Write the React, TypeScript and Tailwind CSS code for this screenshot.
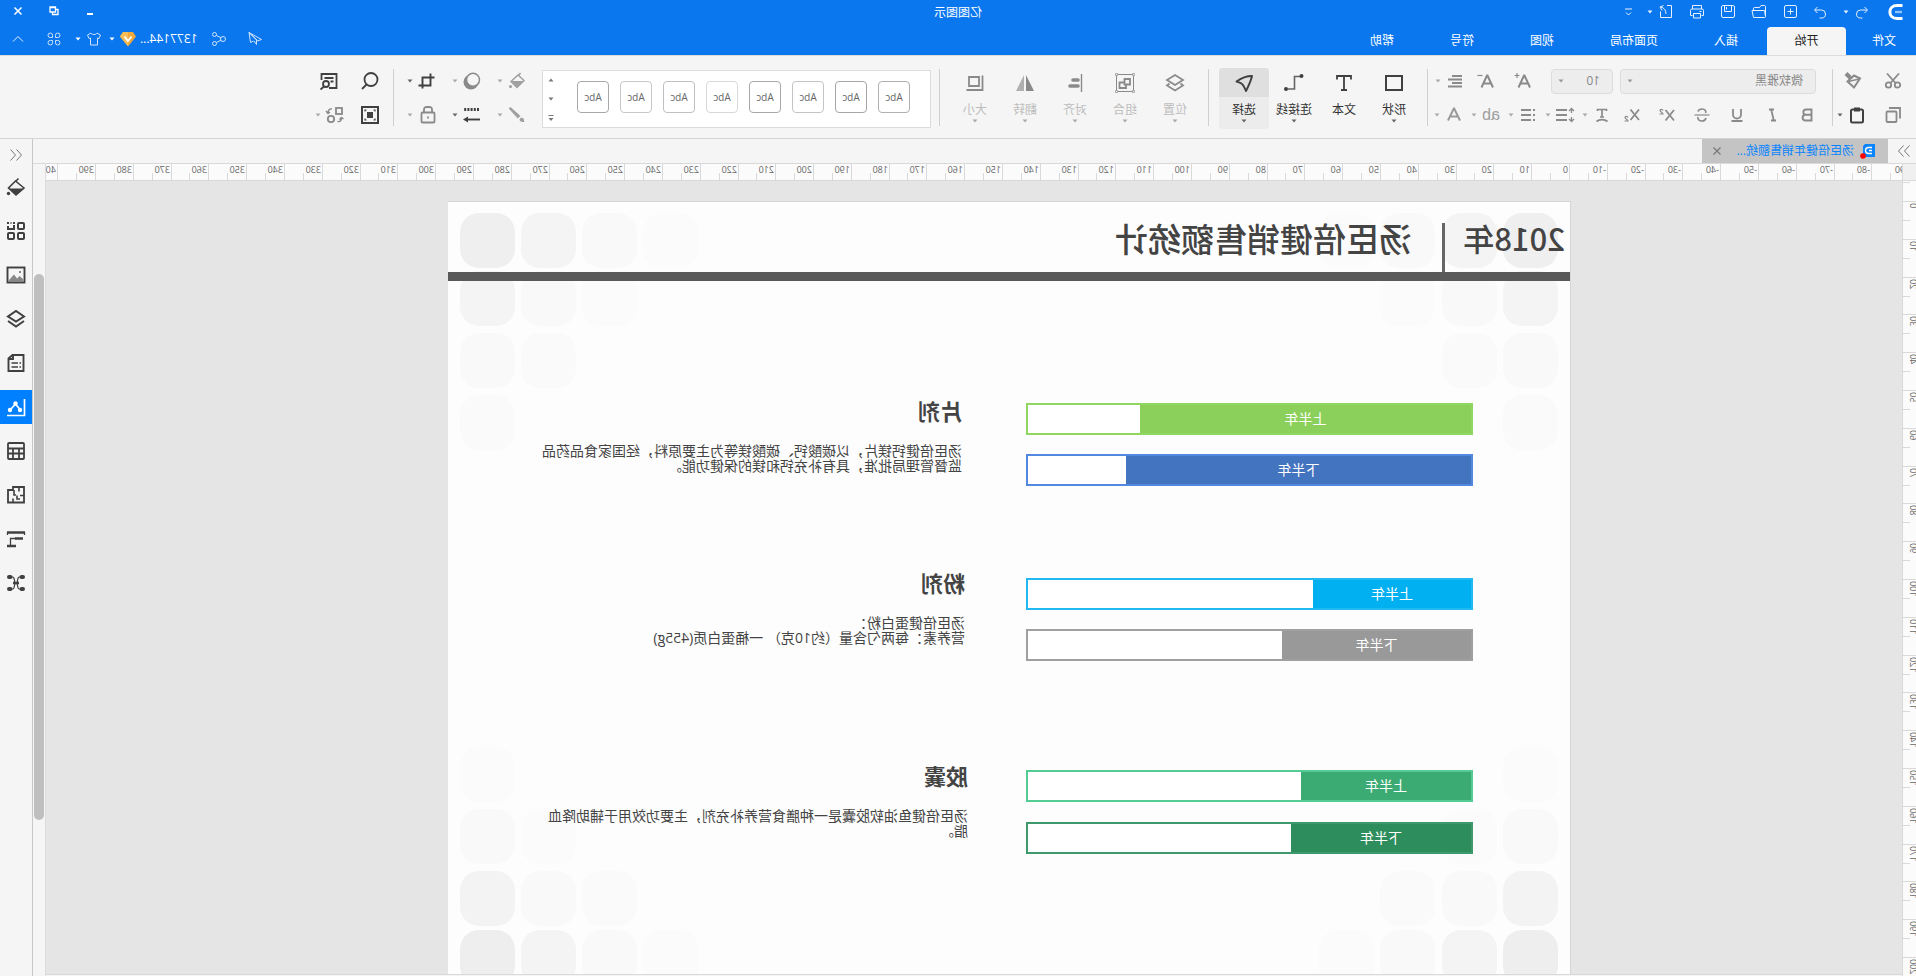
import React from "react";

type P = { children?: React.ReactNode; s?: number; className?: string; sw?: number };

function Ic({ children, s = 20, className = "", sw = 1 }: P) {
  return (
    <svg
      width={s}
      height={s}
      viewBox={`0 0 ${s} ${s}`}
      fill="none"
      stroke="currentColor"
      strokeWidth={sw}
      className={"shrink-0 " + className}
      aria-hidden="true"
    >
      {children}
    </svg>
  );
}

function Caret({ className = "" }: { className?: string }) {
  return (
    <svg width="8" height="8" viewBox="0 0 8 8" className={"shrink-0 " + className} aria-hidden="true">
      <path d="M1.500 2.500h5L4 5.500z" fill="currentColor" />
    </svg>
  );
}

/* ---------- title bar ---------- */

const quick: { name: string; w: string; el: React.ReactNode }[] = [
  {
    name: "撤销",
    w: "w-5",
    el: (
      <Ic s={16}>
        <path d="M5.500 3L2.500 6l3 3M3 6h6.500a3.500 3.500 0 0 1 0 8H7.500" />
      </Ic>
    ),
  },
  { name: "撤销列表", w: "w-3", el: <Caret /> },
  {
    name: "重做",
    w: "w-10",
    el: (
      <Ic s={16}>
        <path d="M10.500 3l3 3-3 3M13 6H6.500a3.500 3.500 0 0 0 0 8H8.500" />
      </Ic>
    ),
  },
  {
    name: "新建",
    w: "w-5",
    el: (
      <Ic s={16}>
        <rect x="1.500" y="1.500" width="12" height="12" rx="1.500" />
        <path d="M7.500 4.500v6M4.500 7.500h6" />
      </Ic>
    ),
  },
  {
    name: "打开",
    w: "w-[42px]",
    el: (
      <Ic s={16}>
        <path d="M1.500 12.500v-10a1 1 0 0 1 1-1h3.500l1.500 2h5a1 1 0 0 1 1 1v1.500M1.500 12.500l1-6h12.500l-1.500 7H2.500a1 1 0 0 1-1-1z" />
      </Ic>
    ),
  },
  {
    name: "保存",
    w: "w-5",
    el: (
      <Ic s={16}>
        <rect x="1.500" y="1.500" width="13" height="12" rx="1.500" />
        <path d="M4.500 1.500v6h7v-6M9.500 3v2.500" />
      </Ic>
    ),
  },
  {
    name: "打印",
    w: "w-[42px]",
    el: (
      <Ic s={16}>
        <path d="M3.500 5V1.500h9V5M3.500 11.500h-2v-5a1.500 1.500 0 0 1 1.500-1.500h10a1.500 1.500 0 0 1 1.500 1.500v5h-2" />
        <path d="M4.500 9.500h7v4.500h-7zM3.500 7.500h2" />
      </Ic>
    ),
  },
  {
    name: "导出",
    w: "w-5",
    el: (
      <Ic s={16}>
        <path d="M7 1.500H2.500v12h11v-6M8 10c0-4 2-6.500 5.500-7M10.500 1.500l3.500 1.500-2 3.500" />
      </Ic>
    ),
  },
  { name: "导出列表", w: "w-3", el: <Caret /> },
];

function TitleBar() {
  return (
    <div className="grid h-[27px] grid-cols-[1fr_auto_1fr] items-start text-white">
      <div className="flex h-6 items-center pl-3">
        <svg width="17" height="18" viewBox="0 0 17 18" fill="none" aria-hidden="true">
          <path d="M1.500 2.500h5.500c9.500 0 9.500 13 0 13H1.500" stroke="#fff" strokeWidth="3" />
          <path d="M2 9h7" stroke="#8fc2fa" strokeWidth="2.400" />
        </svg>
        <div className="ml-[15px] flex items-center">
          {quick.map((q) => (
            <button key={q.name} aria-label={q.name} className={"flex h-6 items-center justify-center opacity-90 " + q.w}>
              {q.el}
            </button>
          ))}
          <button aria-label="自定义快速访问" className="ml-1.5 flex h-6 w-5 items-center justify-center opacity-90">
            <Ic s={10}>
              <path d="M1 2h7M2 5.500L4.500 8 7 5.500" />
            </Ic>
          </button>
        </div>
      </div>
      <h1 className="flex h-[25px] items-center text-xs">亿图图示</h1>
      <div className="flex h-[21px] items-center justify-end">
        <button aria-label="最小化" className="flex w-9 justify-center">
          <Ic s={10} sw={2}>
            <path d="M2 8h6" />
          </Ic>
        </button>
        <button aria-label="还原" className="flex w-9 justify-center">
          <Ic s={10} sw={1.3}>
            <path d="M3.500 3.500h-2.500v5h5.500v-2.500M3.500 1h5.500v5H3.500zM3.500 1.500h5.500" />
          </Ic>
        </button>
        <button aria-label="关闭" className="flex w-9 justify-center">
          <Ic s={10} sw={1.5}>
            <path d="M1.500 1.500l7 7M8.500 1.500l-7 7" />
          </Ic>
        </button>
      </div>
    </div>
  );
}

const tabs = ["插入", "页面布局", "视图", "符号", "帮助"];

function TabRow() {
  return (
    <div className="flex h-7 items-stretch text-xs text-white">
      <button className="w-[70px] pb-px pl-5 text-left">文件</button>
      <button className="w-[79px] rounded-t-sm bg-[#f5f5f5] text-[#222]">开始</button>
      <div className="ml-px flex">
        {tabs.map((t) => (
          <button key={t} className="px-7">
            {t}
          </button>
        ))}
      </div>
      <div className="ml-auto flex h-6 items-center">
        <button aria-label="发送" className="flex w-9 justify-center opacity-80">
          <Ic s={16}>
            <path d="M1.500 8.500L14 1.500l-1.500 10-3-1.500M14 1.500L6.500 9v4.500l2.500-3.500M1.500 8.500l4 1.500M14 1.500L5.500 9.500" />
          </Ic>
        </button>
        <button aria-label="分享" className="flex w-9 justify-center opacity-80">
          <Ic s={16}>
            <circle cx="4" cy="8" r="2.500" />
            <circle cx="12.500" cy="3.500" r="2" />
            <circle cx="12.500" cy="12.500" r="2" />
            <path d="M6 6.800L10.600 4.500M6 9.200l4.600 2.300" />
          </Ic>
        </button>
        <button className="ml-1 flex items-center gap-1">
          <span>1377144...</span>
          <svg width="16" height="14" viewBox="0 0 16 14" aria-hidden="true">
            <path d="M3 0h10l3 4.500L8.500 14h-1L0 4.500z" fill="#f0a93c" />
            <path d="M8 0h5l3 4.500L8 14z" fill="#f7bd57" />
            <path d="M4.500 4.500L8 9l3.500-4.500" fill="none" stroke="#fff" strokeWidth="1.800" />
          </svg>
          <Caret />
        </button>
        <button aria-label="皮肤" className="ml-1.5 flex w-7 items-center gap-1">
          <Ic s={16} className="opacity-80">
            <path d="M5 2L1.500 4l1.500 3.500 1.500-.500v7h7V7l1.500.500L14.500 4 11 2C10 4 6 4 5 2z" />
          </Ic>
          <Caret />
        </button>
        <button aria-label="应用" className="ml-0.5 flex w-9 justify-center opacity-80">
          <Ic s={16}>
            <path d="M6.500 4.500v2h-2a2.250 2.250 0 1 1 2-2zM9.500 4.500v2h2a2.250 2.250 0 1 0-2-2zM6.500 11.500v-2h-2a2.250 2.250 0 1 0 2 2zM9.500 11.500v-2h2a2.250 2.250 0 1 1-2 2z" />
          </Ic>
        </button>
        <button aria-label="收起功能区" className="flex w-9 justify-center opacity-90">
          <Ic s={14}>
            <path d="M2 9.500l5-5 5 5" />
          </Ic>
        </button>
      </div>
    </div>
  );
}

/* ---------- ribbon ---------- */

const Divider = () => <div className="mt-[5px] h-[57px] w-px shrink-0 bg-[#cfcfcf]" />;

function IconBtn({ name, w, children }: { name: string; w: string; children: React.ReactNode }) {
  return (
    <button aria-label={name} className={"flex h-[34px] shrink-0 items-center justify-center " + w}>
      {children}
    </button>
  );
}

function DropBtn({ name, children, dark }: { name: string; children: React.ReactNode; dark?: boolean }) {
  return (
    <button aria-label={name} className="flex h-[34px] w-8 shrink-0 items-center gap-[3px]">
      {children}
      <Caret className={dark ? "text-[#666]" : "text-[#aaa]"} />
    </button>
  );
}

function Pick({ label, value, w }: { label: string; value: string; w: string }) {
  return (
    <div className={"grid h-[25px] items-center " + w}>
      <select
        aria-label={label}
        className="col-start-1 row-start-1 h-[25px] w-full appearance-none rounded-sm border border-[#dcdcdc] bg-[#ededed] pl-3 text-xs text-[#888]"
      >
        <option>{value}</option>
      </select>
      <Caret className="pointer-events-none col-start-1 row-start-1 mr-1.5 justify-self-end text-[#999]" />
    </div>
  );
}

const G = "text-[#8a8a8a]";
const D = "text-[#404040]";

function ClipboardGroup() {
  return (
    <div className="w-[83px] shrink-0">
      <div className="flex">
        <IconBtn name="剪切" w="w-[46px]">
          <Ic className={G} sw={1.8}>
            <circle cx="5.500" cy="14" r="2.700" />
            <circle cx="14.500" cy="14" r="2.700" />
            <path d="M4 2.500l8.500 9.500M16 2.500L7.500 12" />
          </Ic>
        </IconBtn>
        <IconBtn name="格式刷" w="w-[34px]">
          <Ic className={G} sw={2}>
            <path d="M3 7.500l6-3 6.500 6L9 16.500z" />
            <path d="M3.500 8l11.500 2.500" strokeWidth="1.600" />
            <path d="M12.500 7L17 2.500" strokeWidth="4" />
          </Ic>
        </IconBtn>
      </div>
      <div className="flex">
        <IconBtn name="复制" w="w-[46px]">
          <Ic className={G} sw={1.8}>
            <rect x="6.500" y="6.500" width="10" height="10.500" rx="1" />
            <path d="M14 3H3v10.500" />
          </Ic>
        </IconBtn>
        <IconBtn name="粘贴" w="w-[26px]">
          <Ic className={D} sw={2}>
            <rect x="4" y="4.500" width="12" height="13" rx="1.500" />
            <path d="M7 4.500h6" strokeWidth="4" />
          </Ic>
        </IconBtn>
        <IconBtn name="粘贴选项" w="w-2">
          <Caret className="text-[#666]" />
        </IconBtn>
      </div>
    </div>
  );
}

function FontGroup() {
  return (
    <div className="ml-[7px] w-[397px] shrink-0">
      <div className="flex h-[34px] items-center">
        <div className="ml-[9px] flex gap-[7px]">
          <Pick label="字体" value="微软雅黑" w="w-[196px]" />
          <Pick label="字号" value="10" w="w-[62px]" />
        </div>
        <div className="ml-2 flex">
          <IconBtn name="增大字号" w="w-[37px]">
            <Ic className={G} sw={2}>
              <path d="M4 16.500L9.500 4.500h.500L15.500 16.500M6.500 12.500h7" />
              <path d="M14.500 4.500h5M17 2v5" strokeWidth="1.200" />
            </Ic>
          </IconBtn>
          <IconBtn name="减小字号" w="w-[37px]">
            <Ic className={G} sw={2}>
              <path d="M4 16.500L9.500 4.500h.500L15.500 16.500M6.500 12.500h7" />
              <path d="M14.500 4.500h5" strokeWidth="1.200" />
            </Ic>
          </IconBtn>
        </div>
        <div className="ml-1">
          <DropBtn name="对齐">
            <Ic className={G} sw={1.8}>
              <path d="M3 5h10M3 8.500h14M3 12h10M3 15.500h14" />
            </Ic>
          </DropBtn>
        </div>
      </div>
      <div className="flex">
        <IconBtn name="加粗" w="w-[35px]">
          <Ic className={G} sw={1.9}>
            <path d="M5.500 4.500H11a2.600 2.600 0 0 1 0 5.300H5.500zM5.500 9.800H12a2.900 2.900 0 0 1 0 5.700H5.500z" />
          </Ic>
        </IconBtn>
        <IconBtn name="斜体" w="w-[35px]">
          <Ic className={G} sw={1.8}>
            <path d="M8 4.500h5M6 15.500h5M10.800 4.500L8.200 15.500" />
          </Ic>
        </IconBtn>
        <IconBtn name="下划线" w="w-[35px]">
          <Ic className={G} sw={1.8}>
            <path d="M6 4v5.500a4 4 0 0 0 8 0V4M4.500 16h11" />
          </Ic>
        </IconBtn>
        <IconBtn name="删除线" w="w-[35px]">
          <Ic className={G} sw={1.7}>
            <path d="M2.500 10h15" strokeWidth="1.200" />
            <path d="M14 6.500c-.500-1.500-2-2.500-4-2.500-3 0-4.500 2-3.500 4M6 13c.500 2 2 3 4 3 3 0 4.800-2 3.800-4" />
          </Ic>
        </IconBtn>
        <IconBtn name="上标" w="w-[35px]">
          <Ic className={G} sw={1.8}>
            <path d="M3 5l8.500 10.500M11.500 5L3 15.500" />
            <path d="M14 5.500c.500-1.500 3-1.500 3 0s-3 2-3 3.500h3.500" strokeWidth="1.200" />
          </Ic>
        </IconBtn>
        <IconBtn name="下标" w="w-[35px]">
          <Ic className={G} sw={1.8}>
            <path d="M3 4.500l8.500 10.500M11.500 4.500L3 15" />
            <path d="M14 12.500c.500-1.500 3-1.500 3 0s-3 2-3 3.500h3.500" strokeWidth="1.200" />
          </Ic>
        </IconBtn>
        <div className="ml-[3px] flex gap-[5px]">
          <DropBtn name="文字效果">
            <Ic className={G} sw={1.7}>
              <path d="M5.500 6V4.500h9V6M10 4.500v7.500M8 12h4M4.500 16.500c3-2.500 8-2.500 11 0" />
            </Ic>
          </DropBtn>
          <DropBtn name="行距">
            <Ic className={G} sw={1.9}>
              <path d="M8 5h11M8 10h11M8 15h11" />
              <path d="M3.500 3.500v4.500M3.500 12v4.500M1 6l2.500-2.500L6 6M1 14l2.500 2.500L6 14" strokeWidth="1.300" />
            </Ic>
          </DropBtn>
          <DropBtn name="项目符号">
            <Ic className={G} sw={1.9}>
              <path d="M7 5h10M7 10h10M7 15h10M3 5h2M3 10h2M3 15h2" />
            </Ic>
          </DropBtn>
          <DropBtn name="突出显示">
            <span className="w-5 text-center font-['Liberation_Sans',sans-serif] text-base leading-5 text-[#a0a0a0]">ab</span>
          </DropBtn>
          <DropBtn name="字体颜色">
            <Ic className="text-[#9a9a9a]" sw={2}>
              <path d="M4 15.500L9.800 3.500h.400l5.800 12M6 11.500h8" />
            </Ic>
          </DropBtn>
        </div>
      </div>
    </div>
  );
}

const tools: { label: string; caret: boolean; icon: React.ReactNode }[] = [
  {
    label: "形状",
    caret: true,
    icon: (
      <Ic sw={2}>
        <rect x="2" y="3" width="16" height="14" />
      </Ic>
    ),
  },
  {
    label: "文本",
    caret: false,
    icon: (
      <Ic sw={1.8}>
        <path d="M3 6.500V3h14v3.500M10 3v14M7 17h6" />
      </Ic>
    ),
  },
  {
    label: "连接线",
    caret: true,
    icon: (
      <Ic sw={1.8}>
        <path d="M3 3.500h6.500v12.500H16" strokeWidth="1.600" opacity="0.8" />
        <circle cx="2.500" cy="3" r="2" fill="currentColor" stroke="none" />
        <circle cx="18" cy="16" r="2" fill="currentColor" stroke="none" />
      </Ic>
    ),
  },
  {
    label: "选择",
    caret: true,
    icon: (
      <Ic sw={1.9}>
        <path d="M2 3c4.500 0 10 1.500 15.500 5.500-2.500 1-5 1.500-6 3C10 13 9.500 15 8 18 5.500 13 3 8 2 3z" strokeLinejoin="round" />
      </Ic>
    ),
  },
];

const arrange: { label: string; icon: React.ReactNode }[] = [
  {
    label: "位置",
    icon: (
      <Ic sw={1.8}>
        <path d="M2 7l8-5 8 5-8 5zM4.500 10.500L2 12.500l8 5 8-5-2.500-2" />
      </Ic>
    ),
  },
  {
    label: "组合",
    icon: (
      <Ic>
        <path d="M1.500 1.500h17v17h-17z" />
        <g fill="#f5f5f5">
          <circle cx="1.500" cy="1.500" r="1.200" />
          <circle cx="18.500" cy="1.500" r="1.200" />
          <circle cx="1.500" cy="18.500" r="1.200" />
          <circle cx="18.500" cy="18.500" r="1.200" />
        </g>
        <path d="M5 6h5.500v5.500H5zM11 9.500h4.500v5.500H9v-3" strokeWidth="1.800" />
      </Ic>
    ),
  },
  {
    label: "对齐",
    icon: (
      <Ic>
        <path d="M3.500 1v18" strokeWidth="1.400" />
        <path d="M7 7h5M7 13h8" strokeWidth="3.600" strokeLinecap="round" />
      </Ic>
    ),
  },
  {
    label: "翻转",
    icon: (
      <Ic>
        <path d="M9 2v16H1z" fill="#8a8a8a" stroke="none" />
        <path d="M11 2v16h8z" fill="#b0b0b0" stroke="none" />
      </Ic>
    ),
  },
  {
    label: "大小",
    icon: (
      <Ic sw={1.8}>
        <path d="M6 4h10v9H6zM2.500 2.500v14.500h16" />
      </Ic>
    ),
  },
];

const galleryBorders = [
  "border-[#b0b0b0]",
  "border-[#a6a6a6]",
  "border-[#c4c4c4]",
  "border-[#a8a8a8]",
  "border-[#d8d8d8]",
  "border-[#c0c0c0]",
  "border-[#c8c8c8]",
  "border-[#a8a8a8]",
];

function Gallery() {
  return (
    <div className="ml-2 mt-1.5 flex h-[58px] w-[389px] shrink-0 justify-between border border-[#dcdcdc] bg-white">
      <div className="flex items-center gap-[11px] pb-3 pl-5 pt-2">
        {galleryBorders.map((b, i) => (
          <button key={i} className={"size-8 rounded border bg-white text-[10px] text-[#666] " + b}>
            Abc
          </button>
        ))}
      </div>
      <div className="flex w-4 flex-col items-center justify-between py-[5px] text-[#777]">
        <button aria-label="上一行">
          <Caret className="rotate-180" />
        </button>
        <button aria-label="下一行">
          <Caret />
        </button>
        <button aria-label="更多样式">
          <Ic s={8}>
            <path d="M1.500 1.500h5" />
            <path d="M1.500 4h5L4 7z" fill="currentColor" stroke="none" />
          </Ic>
        </button>
      </div>
    </div>
  );
}

function StyleGroup() {
  return (
    <div className="ml-[15px] w-[133px] shrink-0">
      <div className="flex gap-[13px]">
        <DropBtn name="填充">
          <Ic className="text-[#a0a0a0]" sw={1.5}>
            <path d="M3 9.500L9 4l7 6.500-6 6z" />
            <path d="M3.500 10h12.500l-6 6.500z" fill="currentColor" stroke="none" />
            <path d="M8.500 4.500L6.500 2" />
            <circle cx="16.500" cy="15.500" r="1.600" fill="currentColor" stroke="none" />
          </Ic>
        </DropBtn>
        <DropBtn name="阴影">
          <Ic className={G} sw={1.5}>
            <circle cx="11" cy="11" r="7.500" fill="currentColor" stroke="none" />
            <circle cx="9" cy="8.800" r="6.500" fill="#f5f5f5" />
          </Ic>
        </DropBtn>
        <DropBtn name="裁剪" dark>
          <Ic className={D} sw={1.9}>
            <path d="M2.500 6.500h12v11M6.500 2.500v12h12" />
          </Ic>
        </DropBtn>
      </div>
      <div className="flex gap-[13px]">
        <DropBtn name="线条">
          <Ic className="text-[#a0a0a0]">
            <path d="M16.500 2l1.800 1.500-9 10-2.800-2.500z" fill="currentColor" stroke="none" />
            <path d="M3 14.500c.500-2 3-2.500 4-1s0 4-4.500 3.500c.500-.500.500-1.500.500-2.500z" fill="currentColor" stroke="none" />
          </Ic>
        </DropBtn>
        <DropBtn name="线型" dark>
          <Ic className={D} sw={1.9}>
            <path d="M2 14.500h14" />
            <path d="M14 11.500l5 3-5 3z" fill="currentColor" stroke="none" />
            <path d="M3 4.500h15" strokeWidth="3" strokeDasharray="2 1.200" />
          </Ic>
        </DropBtn>
        <DropBtn name="锁定">
          <Ic className={G} sw={1.8}>
            <rect x="2.500" y="7.500" width="13" height="10" rx="1" />
            <path d="M5 7V4.500A2.500 2.500 0 0 1 7.500 2h3A2.500 2.500 0 0 1 13 4.500V7M9 11.500v2" />
          </Ic>
        </DropBtn>
      </div>
    </div>
  );
}

function FindGroup() {
  return (
    <div className="ml-3 shrink-0">
      <div className="flex">
        <IconBtn name="查找" w="w-[22px]">
          <Ic className={D} sw={1.8}>
            <circle cx="9" cy="8.500" r="6.500" />
            <path d="M13.500 13.500L18 18" />
          </Ic>
        </IconBtn>
        <IconBtn name="查找替换" w="w-[60px]">
          <Ic className={D} sw={1.8}>
            <path d="M10 17H2.500V3h15v6M5.500 7h9M5.500 10.500h3" />
            <circle cx="13" cy="13" r="3" />
            <path d="M15 15.500l3.500 3" />
          </Ic>
        </IconBtn>
      </div>
      <div className="flex">
        <IconBtn name="适应页面" w="w-[22px]">
          <Ic className={D} sw={2}>
            <rect x="2" y="2" width="16" height="16" />
            <path d="M7 7h6v6H7z" fill="currentColor" stroke="none" />
            <path d="M5 6.500V5h1.500M13.500 5H15v1.500M15 13.500V15h-1.500M6.500 15H5v-1.500" strokeWidth="1.200" />
          </Ic>
        </IconBtn>
        <div className="ml-3.5">
          <DropBtn name="替换形状">
            <Ic className={G} sw={1.8}>
              <rect x="3" y="3" width="6" height="6" />
              <circle cx="14" cy="14" r="3.200" />
              <path d="M13 4c2.500-.500 4 1 4 4M15 7l2 1.500L19 6M7.500 16.500c-3 .500-4-1-4-4M1.500 14l2-1.500 2 2" strokeWidth="1.400" />
            </Ic>
          </DropBtn>
        </div>
      </div>
    </div>
  );
}

function Ribbon() {
  return (
    <div className="flex h-[84px] items-start overflow-hidden border-b border-t border-b-[#d4d4d4] border-t-[#dcdcdc] bg-[#f5f5f5] pt-2">
      <ClipboardGroup />
      <Divider />
      <FontGroup />
      <Divider />
      <div className="ml-2 mt-1 flex w-[210px] shrink-0">
        {tools.map((t) => {
          const on = t.label === "选择";
          return (
            <button
              key={t.label}
              className={"flex h-[61px] w-[50px] flex-col items-center overflow-hidden rounded-sm text-xs text-[#333] " + (on ? "bg-[#ececec]" : "")}
            >
              <span className={"flex h-[29px] w-full items-center justify-center text-[#404040] " + (on ? "bg-[#dfdfdf]" : "")}>
                {t.icon}
              </span>
              <span className="mt-[5px] leading-4">{t.label}</span>
              {t.caret && <Caret className="-mt-px text-[#666]" />}
            </button>
          );
        })}
      </div>
      <Divider />
      <div className="ml-2 mt-1 flex w-[260px] shrink-0">
        {arrange.map((t) => (
          <button key={t.label} className="flex h-[61px] w-[50px] flex-col items-center text-xs text-[#bdbdbd]">
            <span className="flex h-[29px] items-center text-[#8a8a8a]">{t.icon}</span>
            <span className="mt-[5px] leading-4">{t.label}</span>
            <Caret className="-mt-px text-[#aaa]" />
          </button>
        ))}
      </div>
      <Divider />
      <Gallery />
      <StyleGroup />
      <Divider />
      <FindGroup />
    </div>
  );
}

/* ---------- document tab and rulers ---------- */

function DocTabs() {
  return (
    <div className="flex h-[25px] items-stretch border-b border-[#d9d9d9] bg-[#f5f5f5]">
      <button aria-label="展开形状库" className="flex w-7 items-center justify-center pr-1 text-[#777]">
        <Ic s={14}>
          <path d="M1.500 1.500L6.500 7l-5 5.500M7.500 1.500l5 5.500-5 5.500" />
        </Ic>
      </button>
      <div className="flex w-[186px] items-center bg-[#c4c4c4] pl-3 text-xs text-[#0a84ff]">
        <svg width="18" height="18" viewBox="0 0 18 18" className="shrink-0" aria-hidden="true">
          <path d="M1 2h10l2 2v11H1z" fill="#0a84ff" />
          <path d="M4 5.500h3.500a3 3 0 0 1 0 6H4M4 8.500h3" fill="none" stroke="#fff" strokeWidth="1.300" />
          <circle cx="13" cy="14" r="2.800" fill="#f00" />
        </svg>
        <span className="ml-1 whitespace-nowrap">汤臣倍健年销售额统...</span>
        <button aria-label="关闭文档" className="ml-auto mr-2.5 text-[#777]">
          <Ic s={10} sw={1.2}>
            <path d="M1.500 1.500l7 7M8.500 1.500l-7 7" />
          </Ic>
        </button>
      </div>
    </div>
  );
}

const STEP = 37.795;
const at = (n: number) => Math.round(n * STEP);

const hMarks = Array.from({ length: 50 }, (_, i) => i - 9);
const vMarks = Array.from({ length: 22 }, (_, i) => i - 1);

function HRuler() {
  return (
    <div className="min-w-0 flex-1 overflow-hidden">
      <div className="-ml-2 flex h-4">
        {hMarks.map((n) => (
          <div key={n} className="flex shrink-0 border-l border-[#d9d9d9]" style={{ width: at(n + 1) - at(n) }}>
            <span className="w-[18px] whitespace-nowrap pl-px text-[9px] leading-3 text-[#666]">{n * 10}</span>
            <span className="mt-auto h-[7px] w-px bg-[#d9d9d9]" />
          </div>
        ))}
      </div>
    </div>
  );
}

function VRuler() {
  return (
    <div className="h-full w-3.5 shrink-0 overflow-hidden border-r border-[#d9d9d9] bg-[#fbfbfb]">
      <div className="-mt-[18px] flex flex-col">
        {vMarks.map((n) => (
          <div key={n} className="flex shrink-0 flex-col border-t border-[#d9d9d9]" style={{ height: at(n + 1) - at(n) }}>
            <span className="flex h-[18px] items-start">
              <span className="-ml-[3px] rotate-180 pb-px text-[9px] leading-3 text-[#666] [writing-mode:vertical-rl]">
                {n < 0 ? "" : n * 10}
              </span>
            </span>
            <span className="ml-auto h-px w-[7px] bg-[#d9d9d9]" />
          </div>
        ))}
      </div>
    </div>
  );
}

/* ---------- drawing page ---------- */

type Shape = { x: number; y: number; c: string };

const colsLeft = [12, 73, 135, 196];
const colsRight = [1055, 994, 933, 872];
const bands: { y: number; shades: string[] }[] = [
  { y: 11, shades: ["bg-[#efefef]", "bg-[#f4f4f4]", "bg-[#f9f9f9]", "bg-[#fbfbfb]"] },
  { y: 69, shades: ["bg-[#f4f4f4]", "bg-[#f9f9f9]", "bg-[#fbfbfb]"] },
  { y: 131, shades: ["bg-[#f9f9f9]", "bg-[#fafafa]"] },
  { y: 193, shades: ["bg-[#fafafa]"] },
  { y: 545, shades: ["bg-[#fbfbfb]"] },
  { y: 607, shades: ["bg-[#f9f9f9]", "bg-[#fbfbfb]"] },
  { y: 669, shades: ["bg-[#f3f3f3]", "bg-[#f9f9f9]", "bg-[#fafafa]"] },
  { y: 728, shades: ["bg-[#eeeeee]", "bg-[#f4f4f4]", "bg-[#f9f9f9]", "bg-[#fbfbfb]"] },
];
const squares: Shape[] = bands.flatMap((b) =>
  [colsLeft, colsRight].flatMap((cols) => b.shades.map((c, i) => ({ x: cols[i], y: b.y, c }))),
);

const bars: { y: number; label: string; w: number; fill: string; edge: string }[] = [
  { y: 201, label: "上半年", w: 331, fill: "bg-[#8bd05b]", edge: "border-[#8fd760]" },
  { y: 252, label: "下半年", w: 345, fill: "bg-[#4374c0]", edge: "border-[#5289de]" },
  { y: 376, label: "上半年", w: 158, fill: "bg-[#00b0f0]", edge: "border-[#22b8f2]" },
  { y: 427, label: "下半年", w: 189, fill: "bg-[#999999]", edge: "border-[#a0a0a0]" },
  { y: 568, label: "上半年", w: 170, fill: "bg-[#3bab73]", edge: "border-[#54cb92]" },
  { y: 620, label: "下半年", w: 180, fill: "bg-[#2d8d5d]", edge: "border-[#40996c]" },
];

const notes: { x: number; y: number; title: string; text: string }[] = [
  {
    x: 608,
    y: 195,
    title: "片剂",
    text: "汤臣倍健钙镁片，以碳酸钙、碳酸镁等为主要原料，经国家食品药品监督管理局批准，具有补充钙和镁的保健功能。",
  },
  { x: 605, y: 367, title: "粉剂", text: "汤臣倍健蛋白粉：\n营养素：每两勺含量（约10克） 一桶蛋白质(455g)" },
  { x: 602, y: 560, title: "胶囊", text: "汤臣倍健鱼油软胶囊是一种膳食营养补充剂，主要功效用于辅助降血脂。" },
];

function Page() {
  return (
    <div className="relative ml-[331px] mt-5 h-full w-[1123px] shrink-0 overflow-hidden border-l border-t border-[#d6d6d6] bg-[#fdfdfd]">
      {squares.map((s, i) => (
        <div key={i} className={"absolute size-[55px] rounded-[19px] " + s.c} style={{ left: s.x, top: s.y }} />
      ))}
      <header className="relative flex h-[79px] items-stretch border-b-[9px] border-[#595959] font-['Noto_Sans_CJK_SC',sans-serif] text-[#444]">
        <span className="w-[125px] pl-[5px] pt-[15px] text-[31px] font-medium leading-[42px]">2018年</span>
        <span className="mt-[21px] w-[3px] bg-[#666]" />
        <h2 className="pl-[30px] pt-[15px] text-[33px] font-medium leading-[42px]">汤臣倍健销售额统计</h2>
      </header>
      {bars.map((b) => (
        <div
          key={b.y}
          className={"absolute left-[97px] flex h-8 w-[447px] items-stretch border-2 bg-white " + b.edge}
          style={{ top: b.y }}
        >
          <div className={"flex items-center justify-center pb-px text-sm text-white " + b.fill} style={{ width: b.w }}>
            {b.label}
          </div>
        </div>
      ))}
      {notes.map((n) => (
        <section key={n.title} className="absolute w-[426px] text-[#444]" style={{ left: n.x, top: n.y }}>
          <h3 className="mb-[18px] text-[22px] font-bold leading-7">{n.title}</h3>
          <p className="whitespace-pre-line text-sm leading-[15px]">{n.text}</p>
        </section>
      ))}
    </div>
  );
}

/* ---------- side panel ---------- */

const side: { name: string; icon: React.ReactNode }[] = [
  {
    name: "填充",
    icon: (
      <Ic sw={1.6}>
        <path d="M2 11l8.500-7 7 7-7.500 7z" />
        <path d="M2 11.500h15L10 18z" fill="currentColor" stroke="none" />
        <path d="M10.500 4.500L7.500 1.500" />
        <circle cx="17.500" cy="16.500" r="1.700" fill="currentColor" stroke="none" />
      </Ic>
    ),
  },
  {
    name: "符号",
    icon: (
      <Ic sw={2}>
        <rect x="2" y="2" width="6" height="6" rx="1" />
        <path d="M12 4v4h6V5M11 2h2M14.500 2h1M17 2h2" />
        <rect x="2" y="12" width="6" height="6" rx="1" />
        <rect x="12" y="12" width="6" height="6" rx="1" />
      </Ic>
    ),
  },
  {
    name: "图片",
    icon: (
      <Ic sw={1.9}>
        <rect x="1.500" y="2.500" width="17" height="15" />
        <path d="M3 17v-3l3.500-3 2.500 2.500 3-4 5 5.500v2z" fill="#888" stroke="none" />
        <path d="M5 6h2v2H5z" fill="#888" stroke="none" />
      </Ic>
    ),
  },
  {
    name: "图层",
    icon: (
      <Ic sw={2}>
        <path d="M2 7.500L10 2l8 5.500-8 5zM2 12l8 5.500 8-5.500" />
      </Ic>
    ),
  },
  {
    name: "属性",
    icon: (
      <Ic sw={1.9}>
        <path d="M2.500 2h11l4 3.500V18h-15z" />
        <path d="M13 2v4h4.500" />
        <path d="M5 10h1.500M8 10h6.500M5 14h1.500M8 14h6.500" strokeWidth="1.700" />
      </Ic>
    ),
  },
  {
    name: "图表",
    icon: (
      <Ic sw={1.7}>
        <path d="M1.500 2v16.500H19" />
        <path d="M6 12.500L10.500 7l5 5.500" />
        <g fill="currentColor" stroke="none">
          <circle cx="6" cy="13" r="2.200" />
          <circle cx="10.500" cy="6.500" r="2.200" />
          <circle cx="16" cy="13" r="2.200" />
        </g>
      </Ic>
    ),
  },
  {
    name: "表格",
    icon: (
      <Ic sw={1.8}>
        <rect x="2" y="2" width="16" height="16" rx="1" />
        <path d="M2 7.500h16M2 12.500h16M7 7.500V18M13 7.500V18" />
      </Ic>
    ),
  },
  {
    name: "平面图",
    icon: (
      <Ic sw={1.8}>
        <path d="M2 2h11v3h5v12.500H2z" />
        <path d="M7 2v4.500M2 10.500h4M9 10.500v3.500h-3M12 5v5h-2M13 17.500v-4" strokeWidth="1.600" />
      </Ic>
    ),
  },
  {
    name: "甘特图",
    icon: (
      <Ic sw={2.6}>
        <path d="M1 3.500h18M3 9.500h8M10 17h9" />
        <path d="M1.500 3v3M18.500 3v3M10 9.500h5.500v7" strokeWidth="1.300" />
      </Ic>
    ),
  },
  {
    name: "思维导图",
    icon: (
      <Ic sw={1.2}>
        <path d="M4 4h2.500c3 0 1 6 3.500 6s.500-6 3.500-6H16M4 16h2.500c3 0 1-6 3.500-6s.500 6 3.500 6H16" />
        <path d="M3 4h1.500M3 16h1.500M15.500 4H17M15.500 16H17" strokeWidth="4" strokeLinecap="round" />
        <path d="M7 10h6" strokeWidth="2.600" />
      </Ic>
    ),
  },
];

function SidePanel() {
  return (
    <aside className="flex w-[33px] shrink-0 flex-col items-stretch border-l border-[#c8c8c8] bg-[#f5f5f5]">
      <button aria-label="收起面板" className="flex h-[31px] items-center justify-center text-[#777]">
        <Ic s={14}>
          <path d="M6.500 1.500L1.500 7l5 5.500M12.500 1.500L7.500 7l5 5.500" />
        </Ic>
      </button>
      <nav className="flex flex-col gap-2.5">
        {side.map((it) => (
          <button
            key={it.name}
            aria-label={it.name}
            className={"flex h-[34px] items-center justify-center " + (it.name === "图表" ? "bg-[#0080ff] text-white" : "text-[#404040]")}
          >
            {it.icon}
          </button>
        ))}
      </nav>
    </aside>
  );
}

export default function App() {
  return (
    <div className="flex h-screen w-full -scale-x-100 flex-col overflow-hidden bg-[#f5f5f5] font-['Open_Sans','Noto_Sans_CJK_SC',sans-serif]">
      <div className="shrink-0 bg-[#0a77ee]">
        <TitleBar />
        <TabRow />
      </div>
      <Ribbon />
      <div className="flex min-h-0 flex-1">
        <main className="flex min-w-0 flex-1 flex-col">
          <DocTabs />
          <div className="flex min-h-0 flex-1">
            <div className="flex min-w-0 flex-1 flex-col">
              <div className="flex h-[17px] shrink-0 border-b border-[#d9d9d9] bg-[#fbfbfb]">
                <div className="w-3.5 shrink-0 border-r border-[#d9d9d9] bg-[#f0f0f0]" />
                <HRuler />
              </div>
              <div className="flex min-h-0 flex-1">
                <VRuler />
                <div className="mb-px flex min-w-0 flex-1 overflow-hidden border-b border-[#d9d9d9] bg-[#e5e5e5]">
                  <Page />
                </div>
              </div>
            </div>
            <div className="flex w-[13px] shrink-0 flex-col border-l border-[#dcdcdc] px-px pt-[110px]">
              <div className="h-[546px] rounded-full bg-[#bfbfbf]" />
            </div>
          </div>
        </main>
        <SidePanel />
      </div>
    </div>
  );
}
